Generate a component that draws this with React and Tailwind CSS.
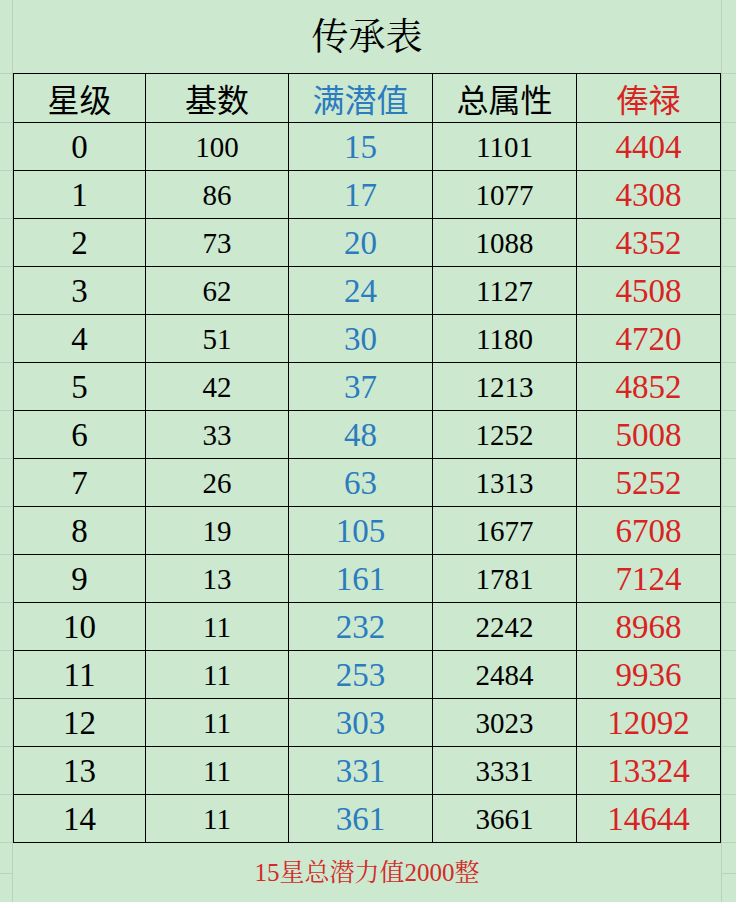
const rows = [
  [0, 100, 15, 1101, 4404],
  [1, 86, 17, 1077, 4308],
  [2, 73, 20, 1088, 4352],
  [3, 62, 24, 1127, 4508],
  [4, 51, 30, 1180, 4720],
  [5, 42, 37, 1213, 4852],
  [6, 33, 48, 1252, 5008],
  [7, 26, 63, 1313, 5252],
  [8, 19, 105, 1677, 6708],
  [9, 13, 161, 1781, 7124],
  [10, 11, 232, 2242, 8968],
  [11, 11, 253, 2484, 9936],
  [12, 11, 303, 3023, 12092],
  [13, 11, 331, 3331, 13324],
  [14, 11, 361, 3661, 14644],
];

const serif = "font-['Liberation_Serif','Noto_Serif_CJK_SC','Noto_Sans_CJK_SC',serif]";

// faint spreadsheet gridlines outside the bordered table
const GridStrip = ({ side }) => (
  <div
    className={`flex flex-col ${
      side === "left" ? "w-[13px] border-r" : "w-[15px] border-l"
    } border-[#b8d2bb]`}
  >
    <div className="h-[74px] shrink-0 border-b border-[#b8d2bb]" />
    <div className="h-[49px] shrink-0 border-b border-[#b8d2bb]" />
    {rows.map((r) => (
      <div key={r[0]} className="h-[48px] shrink-0 border-b border-[#b8d2bb]" />
    ))}
    <div className="h-[31px] shrink-0 border-b border-[#b8d2bb]" />
    <div className="flex-1" />
  </div>
);

const Cell = ({ w, className, children }) => (
  <div
    className={`${w} shrink-0 flex items-center justify-center border-r border-black ${className}`}
  >
    {children}
  </div>
);

const widths = ["w-[132px]", "w-[143px]", "w-[144px]", "w-[144px]", "w-[144px]"];

export default function App() {
  return (
    <div className={`w-[736px] h-[902px] overflow-hidden bg-[#cce8cf] flex ${serif}`}>
      <GridStrip side="left" />

      <div className="w-[708px] flex flex-col">
        {/* Title */}
        <div className="h-[73px] shrink-0 flex items-center justify-center text-[37px] text-black pt-[2px]">
          传承表
        </div>

        {/* Table */}
        <div className="border-t border-l border-black">
          <div className="h-[49px] flex border-b border-black text-[32px] font-['Noto_Sans_CJK_SC',sans-serif]">
            <Cell w={widths[0]} className="text-black">星级</Cell>
            <Cell w={widths[1]} className="text-black">基数</Cell>
            <Cell w={widths[2]} className="text-[#2b7bbf]">满潜值</Cell>
            <Cell w={widths[3]} className="text-black">总属性</Cell>
            <Cell w={widths[4]} className="text-[#d92323]">俸禄</Cell>
          </div>
          {rows.map((r) => (
            <div key={r[0]} className="h-[48px] flex border-b border-black">
              <Cell w={widths[0]} className="pt-[3px] text-[33px] text-black">{r[0]}</Cell>
              <Cell w={widths[1]} className="pt-[3px] text-[29px] text-black">{r[1]}</Cell>
              <Cell w={widths[2]} className="pt-[3px] text-[33px] text-[#2b7bbf]">{r[2]}</Cell>
              <Cell w={widths[3]} className="pt-[3px] text-[29px] text-black">{r[3]}</Cell>
              <Cell w={widths[4]} className="pt-[3px] text-[33px] text-[#d92323]">{r[4]}</Cell>
            </div>
          ))}
        </div>

        {/* Footer note */}
        <div className="flex-1 flex items-center justify-center text-[25px] text-[#d42a2a]">
          15星总潜力值2000整
        </div>
      </div>

      <GridStrip side="right" />
    </div>
  );
}
